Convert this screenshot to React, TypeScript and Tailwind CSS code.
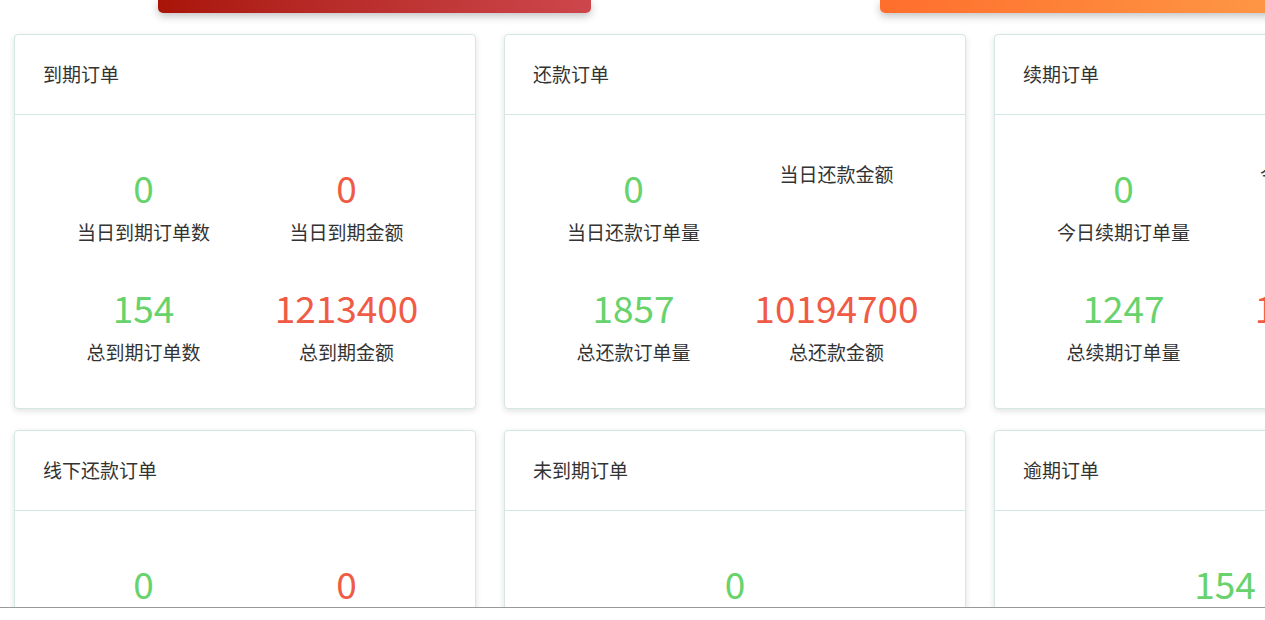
import React from "react";

type Stat = { value: string; label: string; color: "green" | "red" };

type Card = { title: string; cols: 1 | 2; stats: Stat[] };

const cards: Card[] = [
  {
    title: "到期订单",
    cols: 2,
    stats: [
      { value: "0", label: "当日到期订单数", color: "green" },
      { value: "0", label: "当日到期金额", color: "red" },
      { value: "154", label: "总到期订单数", color: "green" },
      { value: "1213400", label: "总到期金额", color: "red" },
    ],
  },
  {
    title: "还款订单",
    cols: 2,
    stats: [
      { value: "0", label: "当日还款订单量", color: "green" },
      { value: "", label: "当日还款金额", color: "red" },
      { value: "1857", label: "总还款订单量", color: "green" },
      { value: "10194700", label: "总还款金额", color: "red" },
    ],
  },
  {
    title: "续期订单",
    cols: 2,
    stats: [
      { value: "0", label: "今日续期订单量", color: "green" },
      { value: "", label: "今日续期总金额", color: "red" },
      { value: "1247", label: "总续期订单量", color: "green" },
      { value: "1246500", label: "总续期金额", color: "red" },
    ],
  },
  {
    title: "线下还款订单",
    cols: 2,
    stats: [
      { value: "0", label: "当日线下还款订单量", color: "green" },
      { value: "0", label: "当日线下还款金额", color: "red" },
    ],
  },
  {
    title: "未到期订单",
    cols: 1,
    stats: [{ value: "0", label: "未到期订单量", color: "green" }],
  },
  {
    title: "逾期订单",
    cols: 1,
    stats: [{ value: "154", label: "逾期订单量", color: "green" }],
  },
];

const font = {
  fontFamily: '"Noto Sans CJK SC", "Noto Sans", sans-serif',
};

const StatCard = ({ card }: { card: Card }) => {
  return (
    <div className="w-[462px] shrink-0 rounded-[4px] border border-[#d5e7e5] bg-white shadow-[0_2px_6px_rgba(0,0,0,0.12)]">
      <div className="h-[80px] flex items-center px-[28px] border-b border-[#d5e7e5] text-[19px] text-[#333]">
        {card.title}
      </div>
      <div
        className={
          card.cols === 2
            ? "grid grid-cols-2 gap-y-[35px] px-[27px] pt-[45px] pb-[43px]"
            : "grid grid-cols-1 gap-y-[35px] px-[27px] pt-[45px] pb-[43px]"
        }
      >
        {card.stats.map((s, i) => (
          <div key={i} className="flex flex-col items-center">
            {/* empty value collapses, label moves up (as in the original) */}
            {s.value !== "" && (
              <div
                className={
                  s.color === "green"
                    ? "text-[37px] leading-[55px] mb-[3px] text-[#68d36c]"
                    : "text-[37px] leading-[55px] mb-[3px] text-[#f05b46]"
                }
              >
                {s.value}
              </div>
            )}
            <div className="text-[19px] leading-[27px] text-[#333] whitespace-nowrap">
              {s.label}
            </div>
          </div>
        ))}
      </div>
    </div>
  );
};

export default function App() {
  return (
    <div className="relative w-[1265px] h-[620px] overflow-hidden bg-white" style={font}>
      {/* banners from the row above, scrolled out of view */}
      <div className="flex h-[13px] pl-[158px] gap-[289px]">
        <div className="w-[433px] h-[13px] shrink-0 rounded-b-[5px] bg-gradient-to-r from-[#a91407] to-[#cd464b] shadow-[0_3px_8px_rgba(0,0,0,0.25)]" />
        <div className="w-[433px] h-[13px] shrink-0 rounded-b-[5px] bg-gradient-to-r from-[#fe6e2c] to-[#fd9a48] shadow-[0_3px_8px_rgba(0,0,0,0.25)]" />
      </div>

      <div className="flex flex-col gap-[21px] pl-[14px] pt-[21px]">
        <div className="flex gap-[28px]">
          {cards.slice(0, 3).map((c) => (
            <StatCard key={c.title} card={c} />
          ))}
        </div>
        <div className="flex gap-[28px]">
          {cards.slice(3).map((c) => (
            <StatCard key={c.title} card={c} />
          ))}
        </div>
      </div>

      {/* bottom bar edge */}
      <div className="absolute left-0 right-0 bottom-0 h-[13px] bg-white border-t border-[#999]" />
    </div>
  );
}
